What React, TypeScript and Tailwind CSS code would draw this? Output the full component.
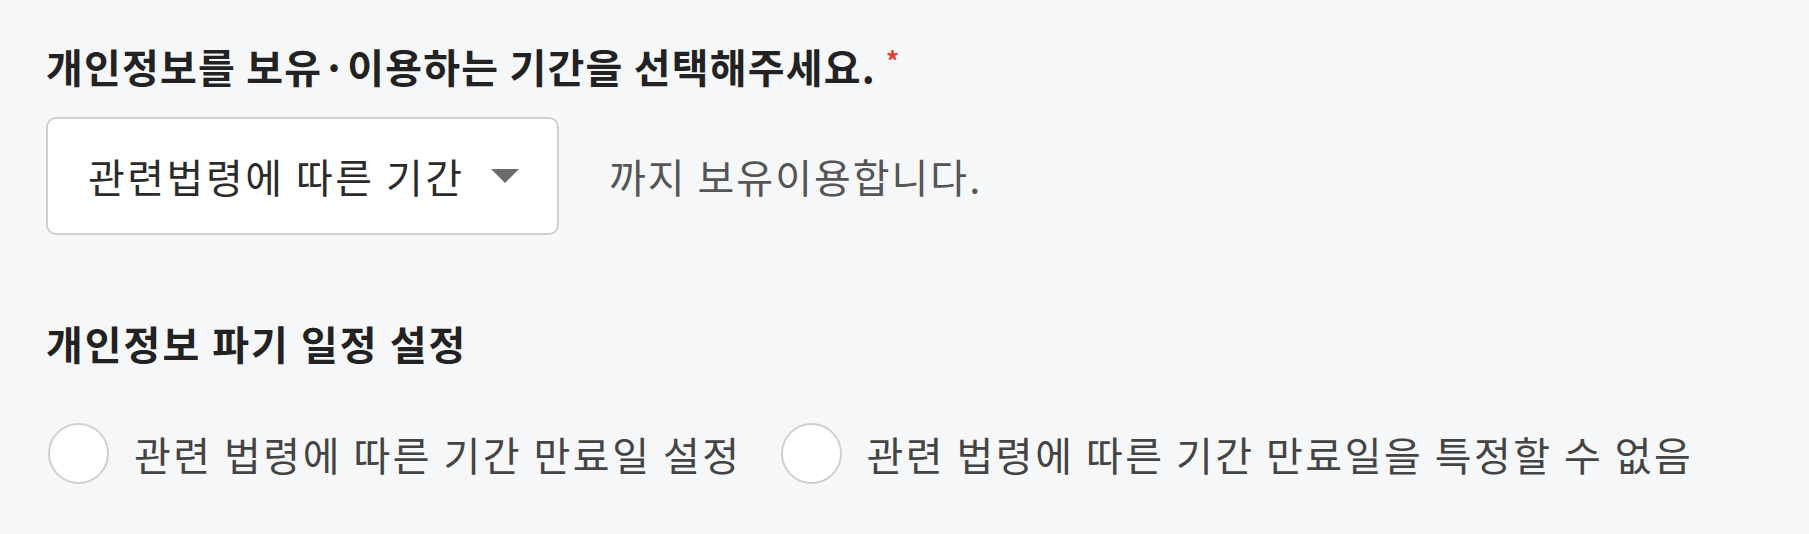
const font = { fontFamily: '"Noto Sans CJK KR", "Noto Sans", sans-serif' };

function Radio({ label }: { label: string }) {
  return (
    <label className="flex items-center gap-[25px]">
      <span className="ml-[2px] h-[61px] w-[61px] shrink-0 rounded-full border-2 border-[#d0d0d0] bg-white" />
      <span className="text-[40px] leading-[46px] tracking-[2.5px] text-[#444444]">{label}</span>
    </label>
  );
}

export default function App() {
  return (
    <div
      className="min-h-[534px] w-full bg-[#f6f7f9] pl-[46px] pt-[43px]"
      style={font}
    >
      <h2 className="flex items-start text-[40px] font-bold leading-[46px] tracking-[1.2px] text-[#222222]">
        개인정보를 보유·이용하는 기간을 선택해주세요.
        <span className="ml-[10px] mt-[4px] text-[26px] font-bold leading-none text-[#e8392b]">*</span>
      </h2>

      <div className="mt-[28px] flex items-center">
        <button
          type="button"
          className="flex h-[118px] w-[513px] items-center rounded-[10px] border-2 border-[#cfcfcf] bg-white pl-[40px] text-[40px] tracking-[2.5px] text-[#2b2b2b]"
        >
          관련법령에 따른 기간
          <svg width="28" height="14" viewBox="0 0 28 14" className="ml-[26px]">
            <path d="M0 0 L28 0 L14 14 Z" fill="#6b6b6b" />
          </svg>
        </button>
        <span className="ml-[50px] text-[40px] tracking-[2px] text-[#555555]">까지 보유이용합니다.</span>
      </div>

      <h2 className="mt-[85px] text-[40px] font-bold leading-[46px] tracking-[2px] text-[#222222]">
        개인정보 파기 일정 설정
      </h2>

      <div className="mt-[57px] flex items-center gap-[37px]">
        <Radio label="관련 법령에 따른 기간 만료일 설정" />
        <Radio label="관련 법령에 따른 기간 만료일을 특정할 수 없음" />
      </div>
    </div>
  );
}
